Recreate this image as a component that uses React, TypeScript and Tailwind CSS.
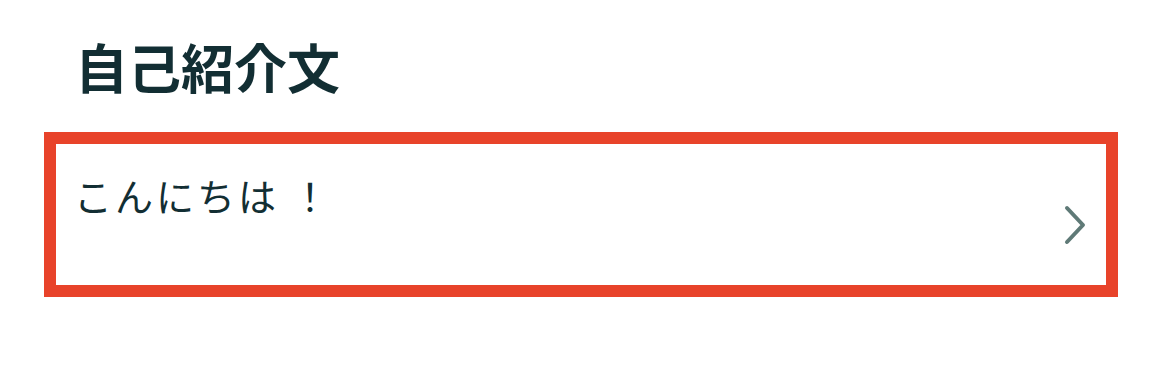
export default function App() {
  return (
    <div
      className="h-[389px] w-[1170px] bg-white pl-[44px] pr-[52px] pt-[36px]"
      style={{ fontFamily: '"Noto Sans CJK JP", "Noto Sans", sans-serif' }}
    >
      <h1 className="pl-[31px] text-[53px] font-bold leading-[60px] text-[#122e33]">自己紹介文</h1>
      <div className="mt-[36px] flex h-[165px] items-stretch border-[12px] border-[#e8432a] bg-white">
        <p className="flex-1 pl-[18px] pt-[26px] text-[38px] leading-[50px] tracking-[3px] text-[#122e33]">
          こんにちは<span className="ml-[12px]">！</span>
        </p>
        <div className="flex items-center pr-[20px] pt-[20px]">
          <svg width="22" height="40" viewBox="0 0 22 40" fill="none">
            <path d="M3 3 L19 20 L3 37" stroke="#5f7a77" strokeWidth="4" strokeLinecap="round" strokeLinejoin="round" />
          </svg>
        </div>
      </div>
    </div>
  );
}
